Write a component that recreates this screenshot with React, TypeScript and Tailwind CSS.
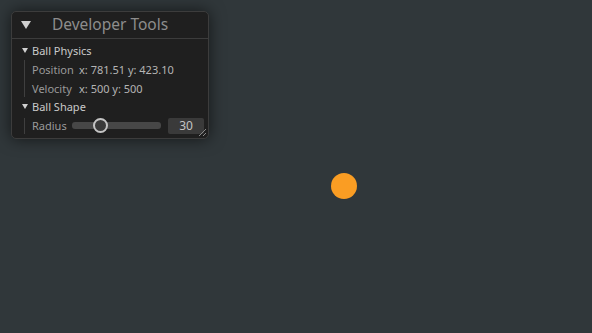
import React from "react";

const font = { fontFamily: '"Noto Sans", "Open Sans", sans-serif' };

function SmallTri() {
  return (
    <svg width="6" height="5" viewBox="0 0 6 5" className="block">
      <polygon points="0,0 6,0 3,5" fill="#d0d0d0" />
    </svg>
  );
}

export default function App() {
  return (
    <div className="relative w-[592px] h-[333px] bg-[#30373a] overflow-hidden" style={font}>
      <div className="absolute left-[11px] top-[11px] w-[198px] h-[128px] bg-[#1f1f1f] border border-[#3c3c3c] rounded-[5px] shadow-[0_0_16px_rgba(0,0,0,0.6)] flex flex-col">
        <div className="h-[26px] border-b border-[#3c3c3c] flex items-center box-content">
          <div className="w-[40px] pl-[9px] flex items-center">
            <svg width="10" height="8" viewBox="0 0 10 8" className="block">
              <polygon points="0,0 10,0 5,8" fill="#cfcfcf" />
            </svg>
          </div>
          <div className="text-[15.5px] text-[#8d8d8d] leading-none">Developer Tools</div>
        </div>
        <div className="pt-[2px] flex flex-col relative flex-1">
          <div className="h-[19px] flex items-center">
            <div className="w-[20px] pl-[10px]"><SmallTri /></div>
            <span className="text-[11px] text-[#cacaca] leading-none">Ball Physics</span>
          </div>
          <div className="ml-[12px] border-l border-[#3f3f3f] pl-[7px] flex flex-col">
            <div className="h-[19px] flex items-center text-[11px] leading-none">
              <span className="w-[47px] text-[#9a9a9a]">Position</span>
              <span className="text-[#b4b4b4]">x: 781.51 y: 423.10</span>
            </div>
            <div className="h-[18px] flex items-center text-[11px] leading-none">
              <span className="w-[47px] text-[#9a9a9a]">Velocity</span>
              <span className="text-[#b4b4b4]">x: 500 y: 500</span>
            </div>
          </div>
          <div className="h-[19px] flex items-center">
            <div className="w-[20px] pl-[10px]"><SmallTri /></div>
            <span className="text-[11px] text-[#cacaca] leading-none">Ball Shape</span>
          </div>
          <div className="ml-[12px] h-[19px] flex items-center">
            <div className="w-px h-[16px] bg-[#3f3f3f]" />
            <span className="ml-[7px] w-[40px] text-[11px] text-[#9a9a9a] leading-none">Radius</span>
            <div className="relative w-[89px] h-[7px] rounded-[3px] bg-[#474747]">
              <div className="absolute left-[21px] top-[-4px] w-[15px] h-[15px] rounded-full border-2 border-[#c4c4c4] bg-[#3a3a3a]" />
            </div>
            <div className="ml-[7px] w-[36px] h-[16px] rounded-[2px] bg-[#3a3a3a] flex items-center justify-center text-[12px] text-[#c4c4c4] leading-none">30</div>
          </div>
          <svg width="9" height="9" viewBox="0 0 9 9" className="absolute right-[1px] bottom-[1px]">
            <line x1="1" y1="8" x2="8" y2="1" stroke="#8a8a8a" strokeWidth="1" />
            <line x1="5" y1="8" x2="8" y2="5" stroke="#8a8a8a" strokeWidth="1" />
          </svg>
        </div>
      </div>
      <div className="absolute left-[331px] top-[173px] w-[26px] h-[26px] rounded-full bg-[#fa9d23]" />
    </div>
  );
}
